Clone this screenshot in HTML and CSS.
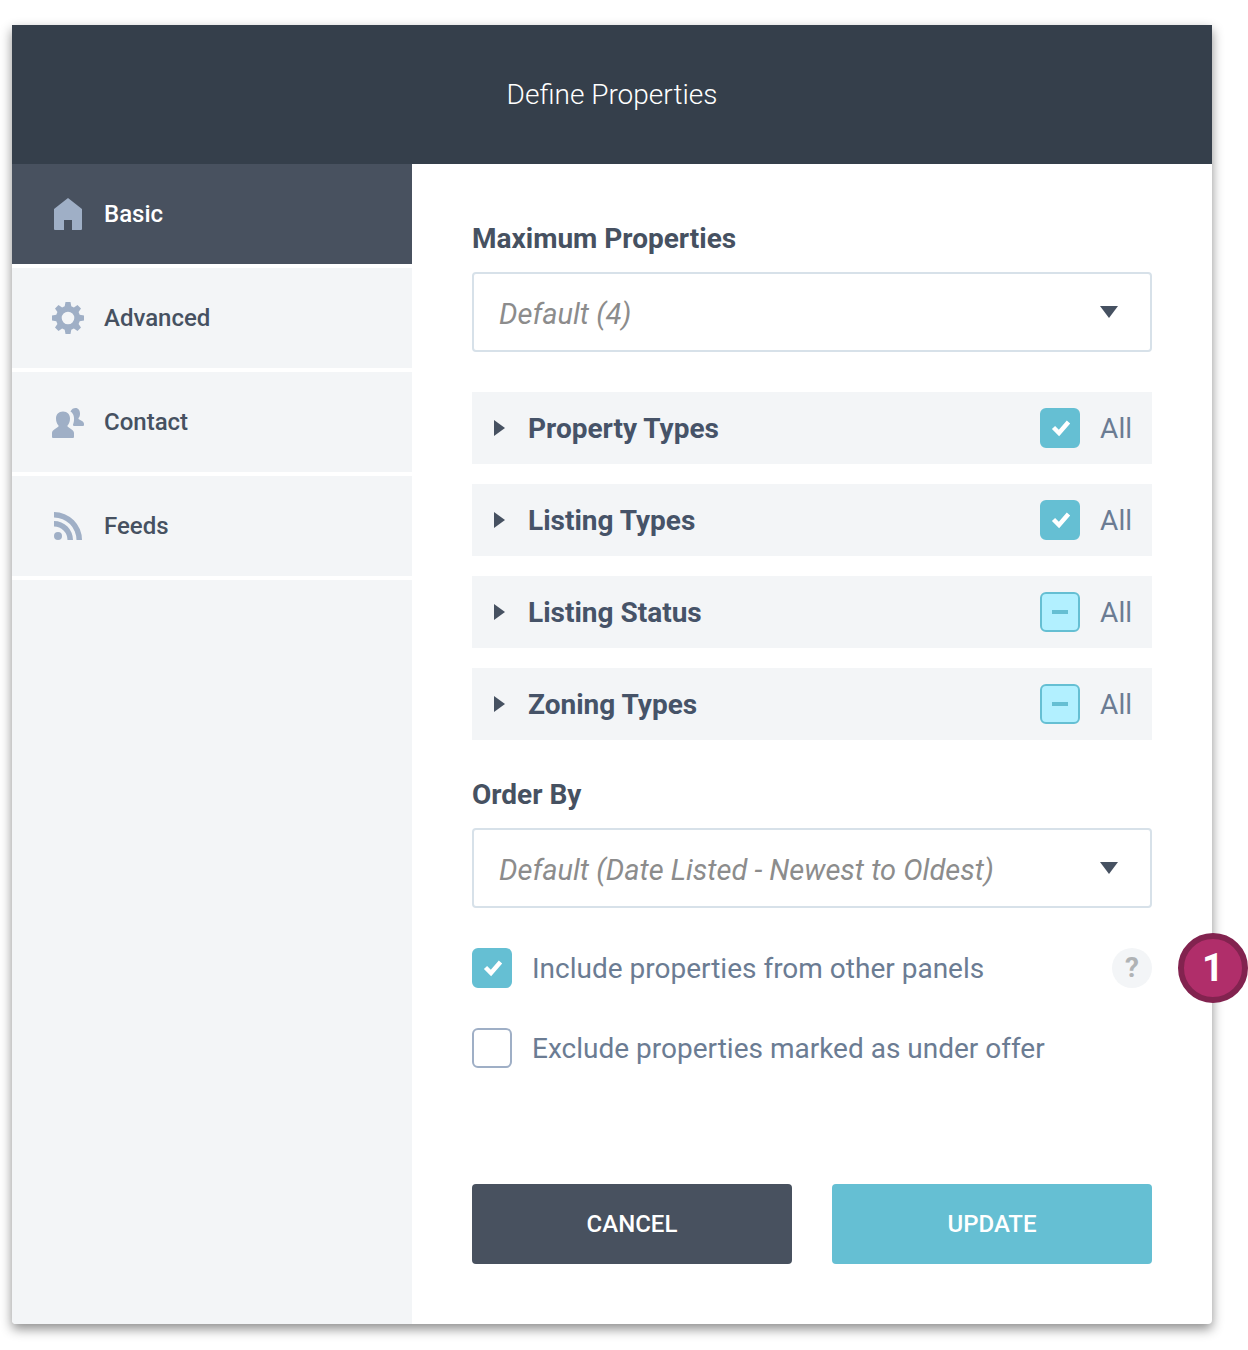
FILE: index.html
```html
<!DOCTYPE html>
<html lang="en">
<head>
  <meta charset="UTF-8">
  <meta name="viewport" content="width=device-width, initial-scale=1.0">
  <title>Define Properties</title>
  <link rel="stylesheet" href="styles.css">
</head>
<body>
  <div class="panel">
    <header class="panel-header">
      <h1>Define Properties</h1>
    </header>

    <div class="panel-body">
      <nav class="sidebar">
        <a href="#basic" class="tab active">
          <svg class="tab-icon" viewBox="0 0 32 32" aria-hidden="true">
            <path d="M16 0 L30 11 V31 Q30 32 29 32 H20 V22 H12 V32 H3 Q2 32 2 31 V11 Z"/>
          </svg>
          Basic
        </a>
        <a href="#advanced" class="tab">
          <svg class="tab-icon" viewBox="0 0 32 32" aria-hidden="true">
            <path fill-rule="evenodd" d="M13.500 0 H18.500 L19.300 4.300 L21.900 5.400 L25.500 3 L29 6.500 L26.600 10.100 L27.700 12.700 L32 13.500 V18.500 L27.700 19.300 L26.600 21.900 L29 25.500 L25.500 29 L21.900 26.600 L19.300 27.700 L18.500 32 H13.500 L12.700 27.700 L10.100 26.600 L6.500 29 L3 25.500 L5.400 21.900 L4.300 19.300 L0 18.500 V13.500 L4.300 12.700 L5.400 10.100 L3 6.500 L6.500 3 L10.100 5.400 L12.700 4.300 Z M16 9.700 A6.300 6.300 0 1 0 16 22.300 A6.300 6.300 0 1 0 16 9.700 Z"/>
          </svg>
          Advanced
        </a>
        <a href="#contact" class="tab">
          <svg class="tab-icon" viewBox="0 -2 32 32" aria-hidden="true">
            <path d="M11 3.500 C15.500 3.500 18 6.500 18 10.500 C18 13.500 17 16 15.500 17.500 V18.500 C18 20.500 22 22 22 25 V29 Q22 30 21 30 H1 Q0 30 0 29 V25 C0 22 4 20.500 6.500 18.500 V17.500 C5 16 4 13.500 4 10.500 C4 6.500 6.500 3.500 11 3.500 Z"/>
            <path d="M18.500 3.500 C19.500 1 21.500 0 23.500 0 C26.500 0 28 2.500 28 5.500 C28 7.500 27.500 9 26.500 10 V11 C28.500 12.500 32 13 32 16 V17 Q32 18 31 18 H22 Q21 18 21 16.500 C22.500 13 22.500 8 20.500 5.500 C20 4.500 19.200 4 18.500 3.500 Z"/>
          </svg>
          Contact
        </a>
        <a href="#feeds" class="tab">
          <svg class="tab-icon" viewBox="0 0 32 32" aria-hidden="true">
            <circle cx="6" cy="26" r="4"/>
            <path d="M2 11 A19 19 0 0 1 21 30 H15.500 A13.500 13.500 0 0 0 2 16.500 Z"/>
            <path d="M2 2 A28 28 0 0 1 30 30 H24.500 A22.500 22.500 0 0 0 2 7.500 Z"/>
          </svg>
          Feeds
        </a>
        <div class="sidebar-fill"></div>
      </nav>

      <form class="content">
        <label class="field-label" for="maxProperties">Maximum Properties</label>
        <select class="field-select" id="maxProperties">
          <option>Default (4)</option>
        </select>

        <div class="groups">
          <div class="group">
            <button type="button" class="group-toggle">Property Types</button>
            <label class="check"><input type="checkbox" checked>All</label>
          </div>
          <div class="group">
            <button type="button" class="group-toggle">Listing Types</button>
            <label class="check"><input type="checkbox" checked>All</label>
          </div>
          <div class="group">
            <button type="button" class="group-toggle">Listing Status</button>
            <label class="check"><input type="checkbox" class="partial">All</label>
          </div>
          <div class="group">
            <button type="button" class="group-toggle">Zoning Types</button>
            <label class="check"><input type="checkbox" class="partial">All</label>
          </div>
        </div>

        <label class="field-label" for="orderBy">Order By</label>
        <select class="field-select" id="orderBy">
          <option>Default (Date Listed - Newest to Oldest)</option>
        </select>

        <div class="options">
          <div class="option">
            <label class="check"><input type="checkbox" checked>Include properties from other panels</label>
            <button type="button" class="help">?</button>
            <span class="marker">1</span>
          </div>
          <div class="option">
            <label class="check"><input type="checkbox">Exclude properties marked as under offer</label>
          </div>
        </div>

        <div class="actions">
          <button type="button" class="btn btn-cancel">CANCEL</button>
          <button type="submit" class="btn btn-update">UPDATE</button>
        </div>
      </form>
    </div>
  </div>

  <script>
    // indeterminate can only be set from script
    document.querySelectorAll('.partial').forEach(box => {
      box.indeterminate = true;
    });
  </script>
</body>
</html>
```
FILE: styles.css
```css
* {
  box-sizing: border-box;
}

body {
  margin: 0;
  padding: 25px 36px 26px 12px;
  min-height: 100vh;
  display: flex;
  background-color: #fff;
  font-family: Roboto, Arial, sans-serif;
  font-size: 28px;
  color: #465161;
}

button,
select {
  font-family: inherit;
  cursor: pointer;
}

.panel {
  flex: 1;
  display: flex;
  flex-direction: column;
  background-color: #fff;
  border-radius: 0 0 4px 4px;
  box-shadow: 0 5px 12px rgba(0, 0, 0, 0.45);
}

.panel-header {
  padding: 52px 20px 51px;
  background-color: #353f4b;
  color: #fff;
  text-align: center;
}

h1 {
  margin: 0;
  font-size: 28px;
  line-height: 36px;
  font-weight: 300;
}

.panel-body {
  flex: 1;
  display: grid;
  grid-template-columns: 1fr 2fr;
}

/* Sidebar */
.sidebar {
  display: flex;
  flex-direction: column;
  gap: 4px;
}

.tab {
  display: flex;
  align-items: center;
  gap: 20px;
  height: 100px;
  padding: 0 40px;
  background-color: #f3f5f7;
  color: #465161;
  font-size: 24px;
  font-weight: 500;
  text-decoration: none;
}

.tab.active {
  background-color: #48515f;
  color: #fff;
}

.tab-icon {
  width: 32px;
  height: 32px;
  fill: #9fafc6;
}

.sidebar-fill {
  flex: 1;
  background-color: #f3f5f7;
  border-radius: 0 0 0 4px;
}

/* Form */
.content {
  display: flex;
  flex-direction: column;
  padding: 56px 60px 60px;
}

.field-label {
  margin-bottom: 14px;
  line-height: 38px;
  font-weight: 700;
}

.field-select {
  appearance: none;
  width: 100%;
  height: 80px;
  margin-bottom: 40px;
  padding: 4px 60px 0 25px;
  border: 2px solid #d7e1e9;
  border-radius: 4px;
  background: #fff url("data:image/svg+xml,%3Csvg xmlns='http://www.w3.org/2000/svg' width='18' height='12'%3E%3Cpath d='M0 0H18L9 12Z' fill='%23465161'/%3E%3C/svg%3E") no-repeat right 32px center;
  color: #8c8c8c;
  font-size: 29px;
  font-style: italic;
}

.groups {
  display: flex;
  flex-direction: column;
  gap: 20px;
  margin-bottom: 36px;
}

.group {
  display: flex;
  align-items: center;
  height: 72px;
  padding: 0 20px;
  background-color: #f3f5f7;
}

.group-toggle {
  flex: 1;
  display: flex;
  align-items: center;
  gap: 23px;
  padding: 0 0 0 2px;
  border: none;
  background: none;
  color: #465368;
  font-size: 28px;
  font-weight: 700;
}

.group-toggle::before {
  content: "";
  border: 8px solid transparent;
  border-left: 11px solid #465161;
  border-right: none;
}

.check {
  display: flex;
  align-items: center;
  gap: 20px;
  color: #6b7c93;
}

.check input {
  appearance: none;
  width: 40px;
  height: 40px;
  margin: 0;
  border: 2px solid #9fafc6;
  border-radius: 6px;
  background: #fff no-repeat center;
  background-origin: border-box;
}

.check input:checked {
  border-color: #65bfd3;
  background-color: #65bfd3;
  background-image: url("data:image/svg+xml,%3Csvg xmlns='http://www.w3.org/2000/svg' width='40' height='40'%3E%3Cpath d='M13.500 19.500L19 25L28.500 14' fill='none' stroke='%23fff' stroke-width='4.500'/%3E%3C/svg%3E");
}

.check input:indeterminate {
  border-color: #65bfd3;
  background-color: #b2f0ff;
  background-image: linear-gradient(#65bfd3, #65bfd3);
  background-size: 16px 4px;
}

.options {
  display: flex;
  flex-direction: column;
  gap: 40px;
}

.option {
  position: relative;
  display: flex;
  align-items: center;
  justify-content: space-between;
}

.help {
  width: 40px;
  height: 40px;
  padding: 0 0 2px;
  border: none;
  border-radius: 50%;
  background-color: #f3f5f7;
  color: #b0b3b5;
  font-size: 28px;
  font-weight: 700;
}

/* Callout sits across the right edge of the panel */
.marker {
  position: absolute;
  top: -15px;
  right: -96px;
  width: 70px;
  height: 70px;
  border: 6px solid #82234f;
  border-radius: 50%;
  background-color: #b02e6a;
  color: #fff;
  font-size: 38px;
  font-weight: 700;
  line-height: 58px;
  text-align: center;
}

.actions {
  display: flex;
  gap: 40px;
  margin-top: auto;
  padding-top: 60px;
}

.btn {
  flex: 1;
  height: 80px;
  border: none;
  border-radius: 4px;
  color: #fff;
  font-size: 24px;
  font-weight: 500;
}

.btn-cancel {
  background-color: #48515f;
}

.btn-update {
  background-color: #65bfd3;
}
```
